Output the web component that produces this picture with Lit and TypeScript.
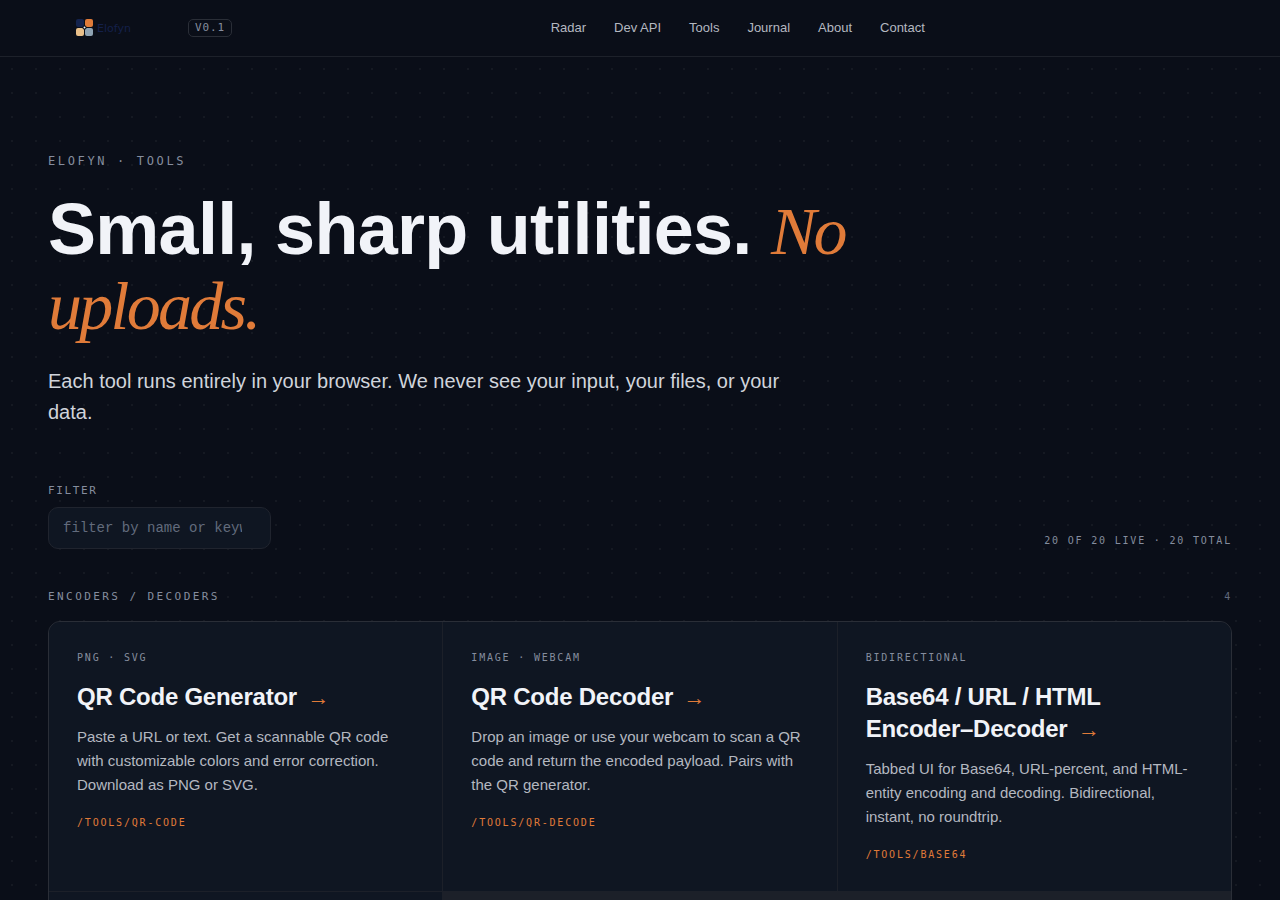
import { LitElement, html, css } from "lit";
import { customElement, property, state } from "lit/decorators.js";

interface Tool {
  tag: string;
  name: string;
  text: string;
  path: string;
}

const LINKS = ["Radar", "Dev API", "Tools", "Journal", "About", "Contact"];

const TOOLS: Tool[] = [
  {
    tag: "PNG · SVG",
    name: "QR Code Generator",
    text: "Paste a URL or text. Get a scannable QR code with customizable colors and error correction. Download as PNG or SVG.",
    path: "/tools/qr-code",
  },
  {
    tag: "Image · Webcam",
    name: "QR Code Decoder",
    text: "Drop an image or use your webcam to scan a QR code and return the encoded payload. Pairs with the QR generator.",
    path: "/tools/qr-decode",
  },
  {
    tag: "Bidirectional",
    name: "Base64 / URL / HTML Encoder–Decoder",
    text: "Tabbed UI for Base64, URL-percent, and HTML-entity encoding and decoding. Bidirectional, instant, no roundtrip.",
    path: "/tools/base64",
  },
];

@customElement("site-header")
export class SiteHeader extends LitElement {
  static styles = css`
    :host {
      display: block;
      background: #0a0e18;
      border-bottom: 1px solid #1d212a;
    }
    .bar {
      display: grid;
      grid-template-columns: 18fr auto 11fr;
      align-items: center;
      height: 56px;
      padding: 0 48px;
    }
    .brand {
      display: flex;
      align-items: center;
      gap: 28px;
      padding-left: 28px;
    }
    .home {
      display: flex;
      width: 84px;
    }
    .version {
      font: 11px/16px "DejaVu Sans Mono", monospace;
      letter-spacing: 0.08em;
      text-transform: uppercase;
      color: #858d9e;
      border: 1px solid #2a2e37;
      border-radius: 5px;
      padding: 0 6px;
    }
    .nav {
      display: flex;
      gap: 28px;
    }
    .link {
      font: 13px/20px "Liberation Sans", sans-serif;
      color: #b4b8c0;
      text-decoration: none;
    }
  `;

  render() {
    return html`
      <div class="bar">
        <div class="brand">
          <a class="home" href="#" aria-label="Elofyn">
            <svg width="60" height="18" viewBox="0 0 60 18">
              <rect x="0" y="0" width="8" height="8" rx="2" fill="#14234d" />
              <rect x="9" y="0" width="8" height="8" rx="2" fill="#e07b39" />
              <rect x="0" y="9" width="8" height="8" rx="2" fill="#e9c08a" />
              <rect x="9" y="9" width="8" height="8" rx="2" fill="#8fa3b3" />
              <circle cx="8.5" cy="8.5" r="2" fill="#0a0e18" />
              <circle cx="8.5" cy="8.5" r="1" fill="#f1f3f8" />
              <text x="21" y="13" font-family="DejaVu Sans, sans-serif" font-size="11" fill="#14204a">Elofyn</text>
            </svg>
          </a>
          <span class="version">v0.1</span>
        </div>
        <nav class="nav">
          ${LINKS.map((label) => html`<a class="link" href="#">${label}</a>`)}
        </nav>
      </div>
    `;
  }
}

@customElement("tool-card")
export class ToolCard extends LitElement {
  @property({ attribute: false }) tool!: Tool;

  static styles = css`
    :host {
      display: block;
      background: #0f1622;
    }
    .card {
      display: block;
      padding: 28px;
      color: inherit;
      text-decoration: none;
    }
    .tag,
    .path {
      font: 10px/16px "DejaVu Sans Mono", monospace;
      letter-spacing: 0.18em;
      text-transform: uppercase;
      color: #858d9e;
    }
    .name {
      margin: 15px 0 12px;
      font: 600 24px/32px "Liberation Sans", sans-serif;
      letter-spacing: -0.01em;
      color: #f1f3f8;
    }
    .arrow {
      margin-left: 4px;
      font-size: 22px;
      font-weight: 400;
      line-height: 24px;
      color: #e07b39;
    }
    .text {
      margin: 0 0 18px;
      font: 15px/24px "Liberation Sans", sans-serif;
      color: #b4b8c0;
    }
    .path {
      color: #e07b39;
    }
  `;

  render() {
    const { tag, name, text, path } = this.tool;
    return html`
      <a class="card" href="#">
        <div class="tag">${tag}</div>
        <h3 class="name">${name} <span class="arrow">→</span></h3>
        <p class="text">${text}</p>
        <div class="path">${path}</div>
      </a>
    `;
  }
}

@customElement("app-root")
export class AppRoot extends LitElement {
  @state() private query = "";

  static styles = css`
    :host {
      display: flex;
      flex-direction: column;
      height: 100vh;
      overflow: hidden;
      background: #0a0e18;
    }
    .page {
      flex: 1;
      min-height: 0;
      overflow: hidden;
      padding: 96px 48px 0;
      background: radial-gradient(#151922 1px, transparent 1px) 0 0 / 24px 24px;
    }
    .eyebrow,
    .label,
    .count,
    .group {
      font: 10px/16px "DejaVu Sans Mono", monospace;
      letter-spacing: 0.18em;
      text-transform: uppercase;
      color: #858d9e;
      margin: 0;
    }
    .eyebrow {
      font-size: 12px;
      letter-spacing: 0.22em;
    }
    .title {
      max-width: 820px;
      margin: 23px 0 24px;
      font: 700 72px/75px "Liberation Sans", sans-serif;
      letter-spacing: -0.01em;
      color: #f1f3f8;
    }
    .accent {
      font: italic 400 68px/60px "Liberation Serif", serif;
      letter-spacing: -0.04em;
      color: #e07b39;
    }
    .lead {
      max-width: 760px;
      margin: 0 0 55px;
      font: 20px/31px "Liberation Sans", sans-serif;
      color: #d0d4db;
    }
    .controls {
      display: flex;
      align-items: flex-end;
      justify-content: space-between;
      margin-bottom: 40px;
    }
    .field {
      display: grid;
      gap: 8px;
    }
    .label,
    .group {
      font-size: 11px;
    }
    .label {
      letter-spacing: 0.15em;
    }
    .search {
      box-sizing: border-box;
      width: 223px;
      height: 42px;
      padding: 0 14px;
      border: 1px solid #20242e;
      border-radius: 10px;
      background: #0f1622;
      color: #f1f3f8;
      font: 14px/20px "Liberation Mono", monospace;
      outline: none;
    }
    .search::placeholder {
      color: #626b7c;
      opacity: 1;
    }
    .heading {
      display: flex;
      justify-content: space-between;
      margin-bottom: 16px;
    }
    .group {
      letter-spacing: 0.22em;
    }
    .total {
      color: #626b7c;
    }
    .grid {
      display: grid;
      grid-template-columns: repeat(3, 1fr);
      gap: 1px;
      border: 1px solid #2a2e37;
      border-radius: 12px;
      overflow: hidden;
      background: #1c2029;
    }
    .next {
      min-height: 268px;
      background: #0f1622;
    }
  `;

  private onInput(event: Event) {
    this.query = (event.target as HTMLInputElement).value;
  }

  render() {
    const query = this.query.toLowerCase();
    const shown = TOOLS.filter((tool) => (tool.name + tool.text).toLowerCase().includes(query));
    return html`
      <site-header></site-header>
      <main class="page">
        <p class="eyebrow">Elofyn · Tools</p>
        <h1 class="title">Small, sharp utilities. <em class="accent">No uploads.</em></h1>
        <p class="lead">
          Each tool runs entirely in your browser. We never see your input, your files, or your data.
        </p>
        <div class="controls">
          <div class="field">
            <label class="label" for="filter">Filter</label>
            <input
              class="search"
              id="filter"
              type="search"
              placeholder="filter by name or keyword"
              @input=${this.onInput}
            />
          </div>
          <p class="count">20 of 20 live · 20 total</p>
        </div>
        <div class="heading">
          <h2 class="group">Encoders / Decoders</h2>
          <span class="count total">4</span>
        </div>
        <div class="grid">
          ${shown.map((tool) => html`<tool-card .tool=${tool}></tool-card>`)}
          <div class="next"></div>
        </div>
      </main>
    `;
  }
}
